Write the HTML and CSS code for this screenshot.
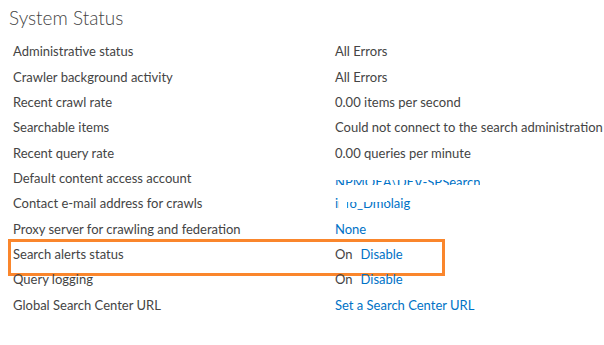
FILE: index.html
```html
<!DOCTYPE html>
<html lang="en">
<head>
  <meta charset="UTF-8">
  <title>System Status</title>
  <link rel="stylesheet" href="styles.css">
</head>
<body>
  <h1 class="title">System Status</h1>

  <div class="status-table">
    <div class="row"><div class="label">Administrative status</div><div class="value">All Errors</div></div>
    <div class="row"><div class="label">Crawler background activity</div><div class="value">All Errors</div></div>
    <div class="row"><div class="label">Recent crawl rate</div><div class="value">0.00 items per second</div></div>
    <div class="row"><div class="label">Searchable items</div><div class="value">Could not connect to the search administration</div></div>
    <div class="row"><div class="label">Recent query rate</div><div class="value">0.00 queries per minute</div></div>
    <div class="row"><div class="label">Default content access account</div><div class="value"><a class="link redact-top">NPMOEA\DEV-SPSearch</a></div></div>
    <div class="row"><div class="label">Contact e-mail address for crawls</div><div class="value"><a class="link redact-mid">info_Dmolaig</a></div></div>
    <div class="row"><div class="label">Proxy server for crawling and federation</div><div class="value"><a class="link">None</a></div></div>
    <div class="row highlight"><div class="label">Search alerts status</div><div class="value"><span class="state">On</span><a class="link">Disable</a></div></div>
    <div class="row"><div class="label">Query logging</div><div class="value"><span class="state">On</span><a class="link">Disable</a></div></div>
    <div class="row"><div class="label">Global Search Center URL</div><div class="value"><a class="link">Set a Search Center URL</a></div></div>
  </div>
</body>
</html>
```

FILE: styles.css
```css
* {
  box-sizing: border-box;
  margin: 0;
  padding: 0;
}

body {
  font-family: 'Segoe UI', Lato, 'Open Sans', sans-serif;
  color: #444;
  background: #fff;
  width: 604px;
  height: 345px;
  overflow: hidden;
}

.title {
  font-size: 19px;
  font-weight: 300;
  color: #444;
  padding: 6px 0 0 9px;
  height: 38.5px;
}

.status-table {
  display: flex;
  flex-direction: column;
}

.row {
  display: grid;
  grid-template-columns: 322px 1fr;
  height: 25.35px;
  align-items: center;
  padding-left: 13px;
  font-size: 13px;
  white-space: nowrap;
  position: relative;
}

.link {
  color: #0072c6;
}

.state {
  margin-right: 8px;
}

/* orange annotation frame */
.highlight::after {
  content: "";
  position: absolute;
  left: 8px;
  top: -2px;
  width: 431px;
  height: 31px;
  border: 3px solid #fa862c;
}

.redact-top {
  display: inline-block;
  height: 9px;
  overflow: hidden;
  line-height: 13px;
  vertical-align: -2px;
  position: relative;
}

.redact-top::before {
  content: "";
  position: absolute;
  left: 0;
  right: 0;
  top: 0;
  height: 4px;
  background: #fff;
}

.redact-mid {
  position: relative;
}

.redact-mid::before {
  content: "";
  position: absolute;
  left: 4px;
  width: 8px;
  top: 0;
  height: 100%;
  background: #fff;
}

.redact-mid::after {
  content: "";
  position: absolute;
  left: 12px;
  width: 40px;
  top: 0;
  height: 7px;
  background: #fff;
}
```
